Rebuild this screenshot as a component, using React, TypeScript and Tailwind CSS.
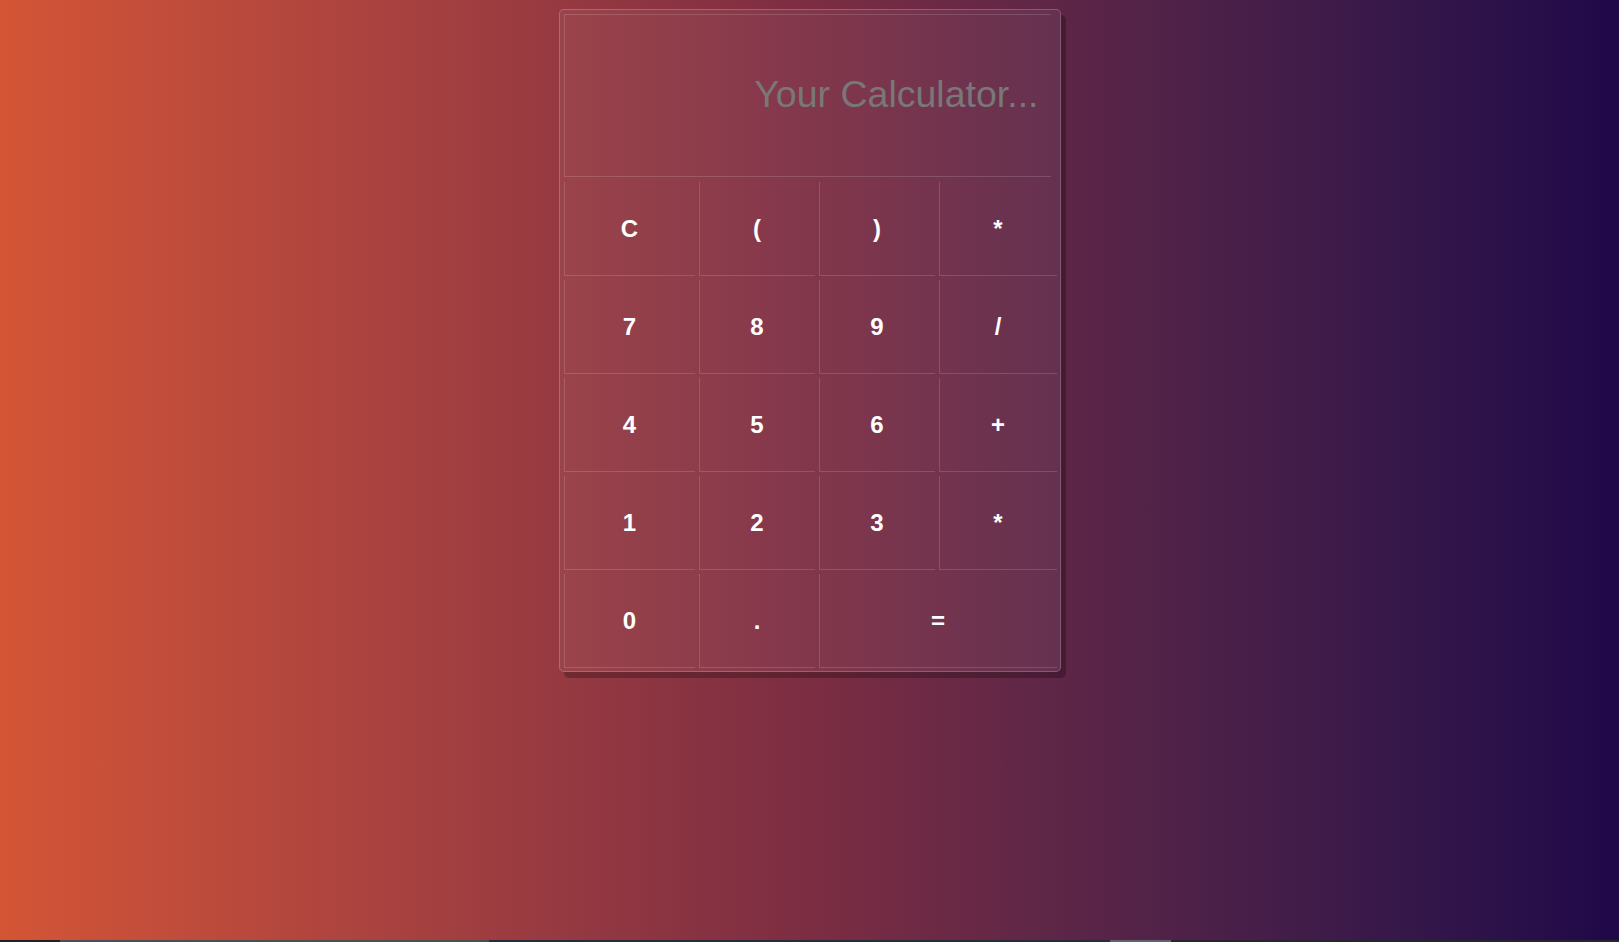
const keys: { label: string; wide?: boolean }[] = [
  { label: "C" },
  { label: "(" },
  { label: ")" },
  { label: "*" },
  { label: "7" },
  { label: "8" },
  { label: "9" },
  { label: "/" },
  { label: "4" },
  { label: "5" },
  { label: "6" },
  { label: "+" },
  { label: "1" },
  { label: "2" },
  { label: "3" },
  { label: "*" },
  { label: "0" },
  { label: "." },
  { label: "=", wide: true },
];

function CalcKey({ label, wide }: { label: string; wide?: boolean }) {
  return (
    <button
      className={
        wide
          ? "col-span-2 h-[94px] border-l border-b border-white/15 text-white text-2xl font-bold"
          : "h-[94px] border-l border-b border-white/15 text-white text-2xl font-bold"
      }
    >
      {label}
    </button>
  );
}

export default function App() {
  return (
    <div className="w-full font-['Liberation_Sans',Arial,sans-serif]">
      <div className="h-[940px] bg-gradient-to-r from-[#d45535] via-[#7c2d42] to-[#200849] flex justify-center pt-[9px]">
        <div className="w-[502px] h-[663px] border border-white/20 rounded-[5px] bg-white/5 shadow-[5px_6px_0_rgba(0,0,0,0.25)] pl-1 pt-1">
          <input
            type="text"
            placeholder="Your Calculator..."
            className="w-[487px] h-[163px] border-l border-t border-b border-white/15 bg-transparent text-right text-[37.5px] pr-3 pb-[3px] text-white placeholder:text-[#787878] outline-none"
          />
          <div className="mt-[5px] grid grid-cols-[131px_116px_116px_118px] gap-1">
            {keys.map((k, i) => (
              <CalcKey key={i} label={k.label} wide={k.wide} />
            ))}
          </div>
        </div>
      </div>
      <div className="h-[2px] flex bg-[#1f2124]">
        <div className="w-[60px]" />
        <div className="w-[429px] bg-[#4a4f55]" />
        <div className="w-[621px] bg-[#262c40]" />
        <div className="w-[61px] bg-[#5d6270]" />
        <div className="flex-1 bg-[#24262b]" />
      </div>
    </div>
  );
}
